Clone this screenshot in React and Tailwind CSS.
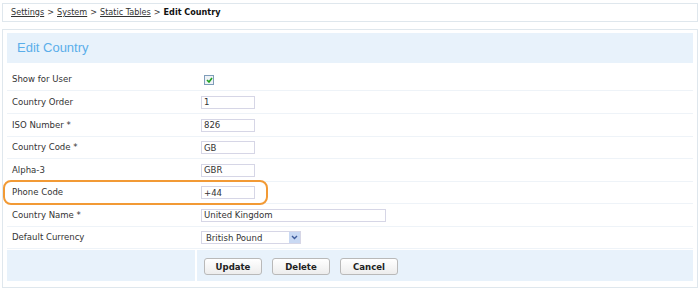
import React from 'react';

const rows = [
  { label: 'Show for User', type: 'check', h: 'h-[22px]' },
  { label: 'Country Order', type: 'text', value: '1', h: 'h-[23px]' },
  { label: 'ISO Number *', type: 'text', value: '826', h: 'h-[23px]' },
  { label: 'Country Code *', type: 'text', value: 'GB', h: 'h-[22px]' },
  { label: 'Alpha-3', type: 'text', value: 'GBR', h: 'h-[23px]' },
  { label: 'Phone Code', type: 'text', value: '+44', h: 'h-[22px]' },
  { label: 'Country Name *', type: 'wide', value: 'United Kingdom', h: 'h-[23px]' },
  { label: 'Default Currency', type: 'select', value: 'British Pound', h: 'h-[22px]' },
];

function Field({ row }) {
  if (row.type === 'check') {
    return (
      <span className="ml-[3px] flex h-[10px] w-[10px] items-center justify-center border border-[#7f9db9] bg-[#eef2f6]">
        <svg width="7" height="6" viewBox="0 0 7 6">
          <path d="M1 3 L3 5 L6 1" fill="none" stroke="#21a121" strokeWidth="1.6" />
        </svg>
      </span>
    );
  }
  if (row.type === 'select') {
    return (
      <div className="flex h-[13px] w-[100px] items-center border border-[#d6d6e6] bg-white">
        <span className="flex-1 pl-[4px] leading-none">{row.value}</span>
        <span className="flex h-full w-[11px] items-center justify-center bg-[#c9d9f3]">
          <svg width="7" height="5" viewBox="0 0 7 5">
            <path d="M1 1 L3.5 3.5 L6 1" fill="none" stroke="#3d5a99" strokeWidth="1.4" />
          </svg>
        </span>
      </div>
    );
  }
  return (
    <div
      className={`flex h-[13px] items-center border border-[#d6d6e6] bg-white pl-[2px] leading-none ${
        row.type === 'wide' ? 'w-[185px]' : 'w-[54px]'
      }`}
    >
      {row.value}
    </div>
  );
}

function Btn({ children }) {
  return (
    <button className="h-[17px] w-[58px] rounded-[3px] border border-[#b9b9b9] bg-gradient-to-b from-white to-[#ededed] text-[9.5px] font-bold leading-none text-[#222]">
      {children}
    </button>
  );
}

export default function App() {
  return (
    <div className="relative h-[290px] w-[700px] bg-white px-[2px] pt-[3px] text-[9.5px] text-[#333] font-stretch-condensed [font-family:'DejaVu_Sans',sans-serif]">
      <div className="flex h-[19px] items-center border border-[#dfe7ed] pl-[8px] text-[9px] text-[#333]">
        <span className="underline">Settings</span>
        <span className="mx-[3px]">&gt;</span>
        <span className="underline">System</span>
        <span className="mx-[3px]">&gt;</span>
        <span className="underline">Static Tables</span>
        <span className="mx-[3px]">&gt;</span>
        <span className="font-bold text-[#111]">Edit Country</span>
      </div>

      <div className="mt-[7px] h-[259px] border border-[#dfe7ed] px-[4px] pt-[3px]">
        <div className="flex h-[30px] items-center bg-[#e8f2fb] pl-[10px] text-[13px] font-stretch-normal text-[#5aaeea] [font-family:'Liberation_Sans',sans-serif]">
          Edit Country
        </div>

        <div className="mt-[6px]">
          {rows.map((row) => (
            <div key={row.label} className={`flex border-b border-[#eef3f8] ${row.h}`}>
              <div className="flex w-[188px] items-center pl-[5px]">{row.label}</div>
              <div className="flex items-center pl-[6px]">
                <Field row={row} />
              </div>
            </div>
          ))}
        </div>

        <div className="mt-[1px] flex h-[31px] gap-[2px]">
          <div className="w-[188px] bg-[#e8f2fb]" />
          <div className="flex flex-1 items-center gap-[10px] bg-[#e8f2fb] pl-[7px] pt-[2px]">
            <Btn>Update</Btn>
            <Btn>Delete</Btn>
            <Btn>Cancel</Btn>
          </div>
        </div>
      </div>

      <div className="pointer-events-none absolute left-[3px] top-[180px] h-[25px] w-[265px] rounded-[8px] border-2 border-[#f29a35]" />
    </div>
  );
}
